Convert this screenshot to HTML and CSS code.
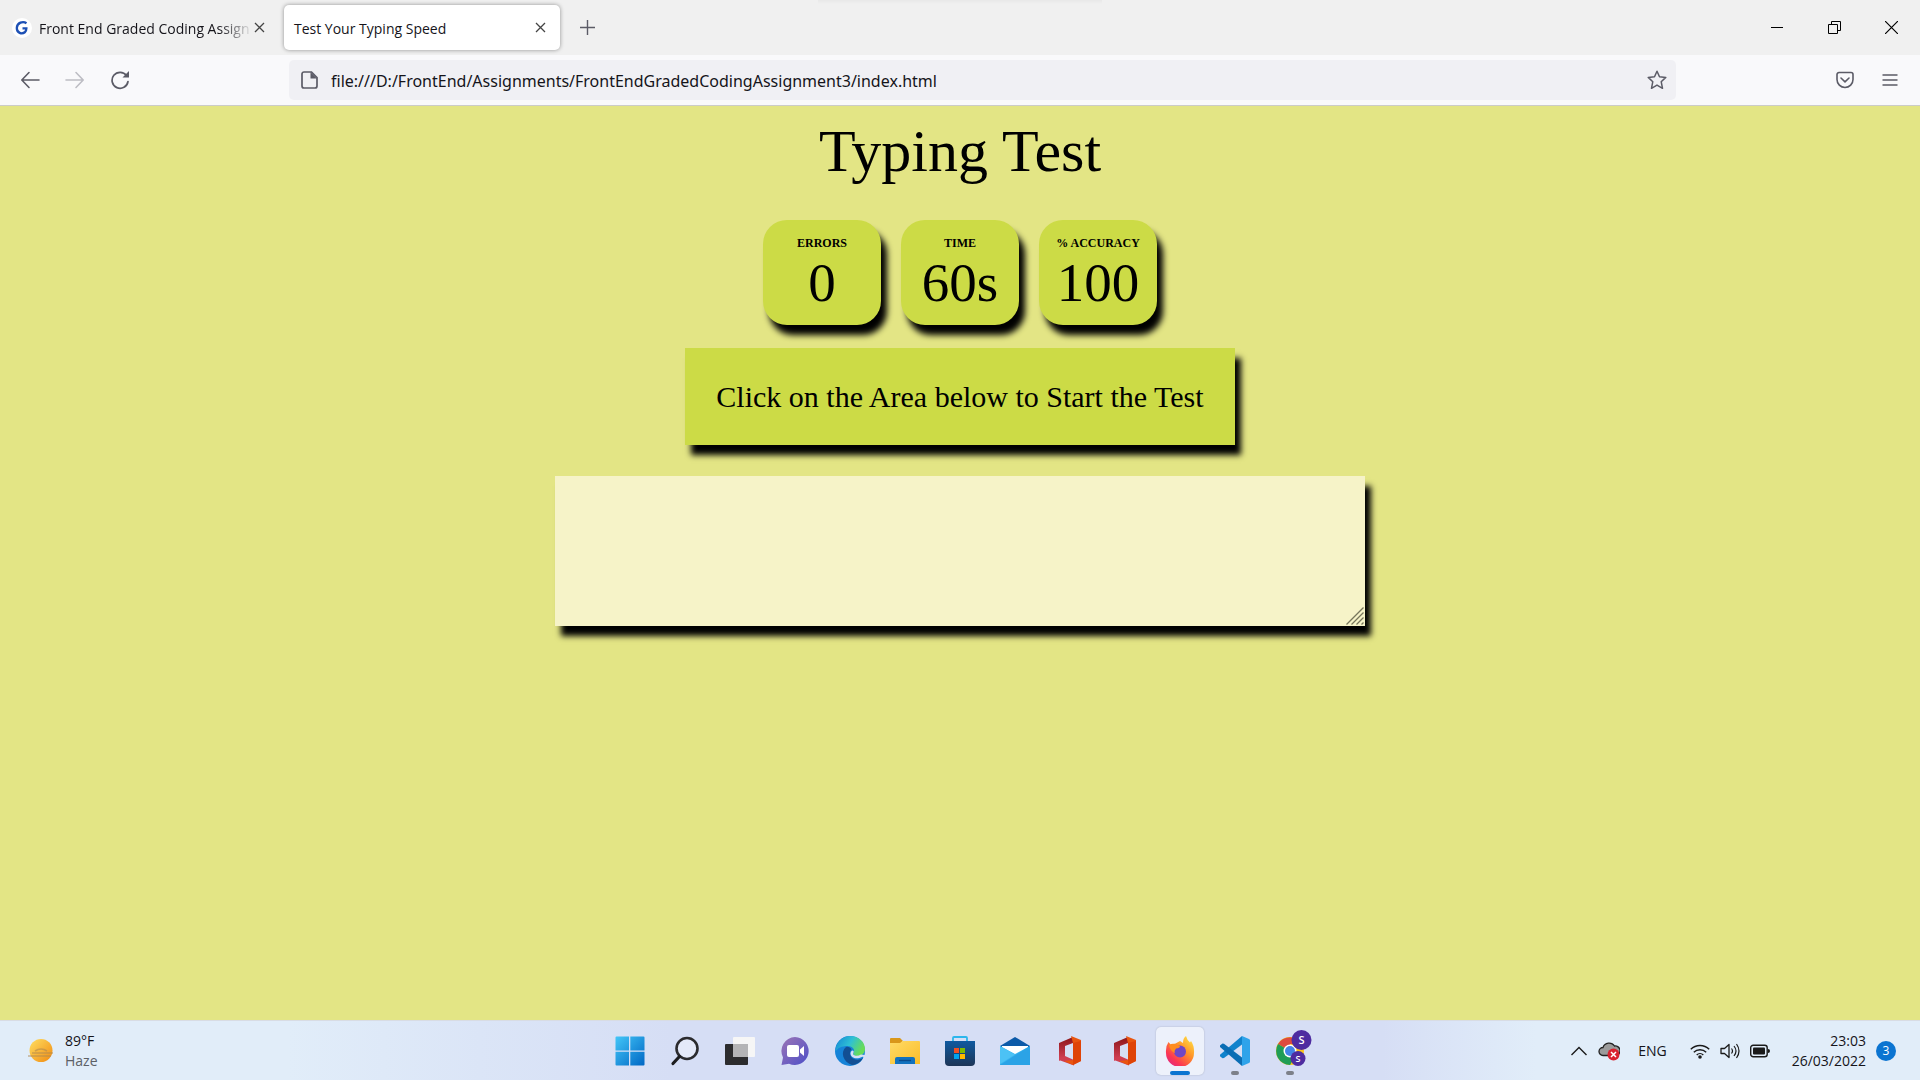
FILE: index.html
```html
<!DOCTYPE html>
<html lang="en">
<head>
<meta charset="utf-8">
<title>Test Your Typing Speed</title>
<link rel="stylesheet" href="styles.css">
</head>
<body>
<header class="browser">
  <div class="tabstrip">
    <div class="tab">
      <svg class="favicon" width="20" height="20" viewBox="0 0 20 20"><circle cx="10" cy="10" r="10" fill="#fff"/><path d="M14.500 5.200C11 2.800 5 4.500 4.800 10c0 5 5 6.500 8 4.300 1.200-1 1.600-2.300 1.600-4H10.500" fill="none" stroke="#1d50b5" stroke-width="2.300"/></svg>
      <button class="tab-title tab-title-faded">Front End Graded Coding Assign</button>
      <button class="tab-close" aria-label="Close tab"><svg width="11" height="11" viewBox="0 0 11 11"><path d="M1 1l9 9M10 1L1 10" stroke="#444" stroke-width="1.300"/></svg></button>
    </div>
    <div class="tab tab-active">
      <button class="tab-title">Test Your Typing Speed</button>
      <button class="tab-close" aria-label="Close tab"><svg width="11" height="11" viewBox="0 0 11 11"><path d="M1 1l9 9M10 1L1 10" stroke="#444" stroke-width="1.300"/></svg></button>
    </div>
    <button class="new-tab" aria-label="New tab"><svg width="15" height="15" viewBox="0 0 15 15"><path d="M7.500 0v15M0 7.500h15" stroke="#5b5b66" stroke-width="1.400"/></svg></button>
    <div class="window-controls">
      <button aria-label="Minimize"><svg width="13" height="13" viewBox="0 0 13 13"><path d="M0 6.500h12" stroke="#000"/></svg></button>
      <button aria-label="Restore"><svg width="13" height="13" viewBox="0 0 13 13"><path d="M.5 3.500h9v9h-9zM3.500 3.500v-3h9v9h-3" fill="none" stroke="#000"/></svg></button>
      <button aria-label="Close"><svg width="13" height="13" viewBox="0 0 13 13"><path d="M0 0l13 13M13 0L0 13" stroke="#000" stroke-width="1.200"/></svg></button>
    </div>
  </div>
  <div class="toolbar">
    <div class="nav">
      <button aria-label="Back"><svg width="20" height="20" viewBox="0 0 20 20"><path d="M19 10H2M9 2.500L1.800 10 9 17.500" fill="none" stroke="#5b5b66" stroke-width="1.600" stroke-linecap="round" stroke-linejoin="round"/></svg></button>
      <button aria-label="Forward" disabled><svg width="20" height="20" viewBox="0 0 20 20"><path d="M1 10h17M11 2.500l7.200 7.500-7.200 7.500" fill="none" stroke="#bdbdc4" stroke-width="1.600" stroke-linecap="round" stroke-linejoin="round"/></svg></button>
      <button aria-label="Reload"><svg width="20" height="20" viewBox="0 0 20 20"><path d="M16.500 5.500A8 8 0 1 0 18 11.500" fill="none" stroke="#5b5b66" stroke-width="1.700" stroke-linecap="round"/><path d="M19 1v6.500h-6.500z" fill="#5b5b66"/></svg></button>
    </div>
    <div class="urlbar">
      <svg width="17" height="18" viewBox="0 0 17 18"><path d="M3 1h7.500L16 6.500V15a2 2 0 0 1-2 2H3a2 2 0 0 1-2-2V3a2 2 0 0 1 2-2z" fill="none" stroke="#5b5b66" stroke-width="1.700"/><path d="M9.500 1v6.500H16z" fill="#5b5b66"/></svg>
      <input class="url" aria-label="Address" value="file:///D:/FrontEnd/Assignments/FrontEndGradedCodingAssignment3/index.html">
      <button aria-label="Bookmark"><svg width="20" height="20" viewBox="0 0 20 20"><path d="M10 1.200l2.500 5.500 6.300.7-4.600 4.300 1.300 6.600-5.500-3.200-5.500 3.200 1.300-6.600L1.200 7.400l6.300-.7z" fill="none" stroke="#5b5b66" stroke-width="1.500" stroke-linejoin="round"/></svg></button>
    </div>
    <div class="tools">
      <button aria-label="Save to Pocket"><svg width="18" height="18" viewBox="0 0 18 18"><path d="M3 1.500h12a2 2 0 0 1 2 2V8.500a8 8 0 0 1-16 0V3.500a2 2 0 0 1 2-2z" fill="none" stroke="#5b5b66" stroke-width="1.600"/><path d="M5 7l4 3.800L13 7" fill="none" stroke="#5b5b66" stroke-width="1.600" stroke-linecap="round" stroke-linejoin="round"/></svg></button>
      <button aria-label="Menu"><svg width="16" height="16" viewBox="0 0 16 16"><path d="M.5 3h15M.5 8h15M.5 13h15" stroke="#5b5b66" stroke-width="1.500"/></svg></button>
    </div>
  </div>
</header>

<main class="page">
  <h1 class="heading">Typing Test</h1>
  <section class="stats">
    <div class="stat"><div class="stat-label">ERRORS</div><div class="stat-value">0</div></div>
    <div class="stat"><div class="stat-label">TIME</div><div class="stat-value">60s</div></div>
    <div class="stat"><div class="stat-label">% ACCURACY</div><div class="stat-value">100</div></div>
  </section>
  <label class="quote" for="typing">Click on the Area below to Start the Test</label>
  <div class="typing-wrap">
    <textarea class="typing" id="typing"></textarea>
    <svg class="grip" width="18" height="18" viewBox="0 0 18 18"><path d="M.5 17.500l17-17M5.500 17.500l12-12M10.500 17.500l7-7M15.500 17.500l2-2" stroke="#77765c" stroke-width="1.300"/></svg>
  </div>
</main>

<footer class="taskbar">
  <button class="weather">
    <svg width="28" height="28" viewBox="0 0 28 28"><defs><linearGradient id="sun" x1="0" y1="0" x2="1" y2="1"><stop offset="0" stop-color="#ffdf62"/><stop offset="1" stop-color="#f08a10"/></linearGradient></defs><circle cx="14" cy="13.500" r="11.500" fill="url(#sun)"/><path d="M5 16h21M1 19h23M8 14q6-4 12 0" stroke="#b08a50" stroke-opacity=".6" stroke-width="1.600" fill="none"/></svg>
    <span class="weather-text"><span>89°F</span><span class="muted">Haze</span></span>
  </button>

  <nav class="apps">
    <button aria-label="Start"><svg width="30" height="30" viewBox="0 0 30 30"><defs><linearGradient id="win" x1="0" y1="0" x2="1" y2="1"><stop offset="0" stop-color="#43c6f8"/><stop offset="1" stop-color="#0067c4"/></linearGradient></defs><path d="M1.500.5H14v14H.5v-13a1 1 0 0 1 1-1zM15.300.5h13.200a1 1 0 0 1 1 1v13H15.300zM.5 15.800H14v13.700H1.500a1 1 0 0 1-1-1zM15.300 15.800h14.200v12.700a1 1 0 0 1-1 1H15.300z" fill="url(#win)"/></svg></button>
    <button aria-label="Search"><svg width="30" height="30" viewBox="0 0 30 30"><circle cx="17" cy="12.500" r="10.500" fill="#e4e9f8" stroke="#2b2b2e" stroke-width="2.600"/><path d="M9.500 20.500L3 27.500" stroke="#1d1d1f" stroke-width="3.200" stroke-linecap="round"/></svg></button>
    <button aria-label="Task view"><svg width="30" height="30" viewBox="0 0 30 30"><rect y="8" width="23" height="21" rx="1" fill="#2c2c2e"/><rect x="8" y="1" width="22" height="20" rx="1" fill="#f6f6f6"/><path d="M8 8h15v13H8z" fill="#b4b4b6"/></svg></button>
    <button aria-label="Chat"><svg width="30" height="30" viewBox="0 0 30 30"><defs><linearGradient id="chat" x1="0" y1="0" x2="1" y2="1"><stop offset="0" stop-color="#9d75b5"/><stop offset="1" stop-color="#4d4fc8"/></linearGradient></defs><path d="M15 1a14 14 0 1 1-6 26.800L1.500 29 3 21.500A14 14 0 0 1 15 1z" fill="url(#chat)"/><rect x="7" y="9" width="12" height="12" rx="2" fill="#fff"/><path d="M20 13.500l4-3.500v10l-4-3.500z" fill="#fff"/></svg></button>
    <button aria-label="Edge"><svg width="30" height="30" viewBox="0 0 30 30"><defs><linearGradient id="edge" x1="0" y1="0" x2="1" y2=".4"><stop offset="0" stop-color="#1386d5"/><stop offset=".55" stop-color="#2fc0d4"/><stop offset="1" stop-color="#67dc58"/></linearGradient></defs><circle cx="15" cy="15" r="15" fill="#1683d8"/><path d="M1 11C3 4 9 0 15 0c9 0 15 6 15 13 0 4-3 7-7.500 7-3 0-5-1.500-4-3 2-3-.5-7-6-7C7 10 2 12 .5 16z" fill="url(#edge)"/><path d="M11 11c-6 5-3 15 6 18 6-.5 9.500-4 11-7-5 3-12 2-13-4-.3-2 .5-3.500 1.500-4.500-1-2-3-3-5.500-2.500z" fill="#124f94"/><path d="M15.500 17.500c.3 4 5.500 6.500 11.500 3.500 1-.5 1.800-.3 1.500.5-.2.700-.6 1.300-1 2L30 26V19l-4-.5c-2 1.200-4.300 1.500-6 1-1.800-.5-2.400-1.500-1.500-3 1-2.500-2.500-3-3 1z" fill="#d7dff5"/></svg></button>
    <button aria-label="File Explorer"><svg width="30" height="30" viewBox="0 0 30 30"><defs><linearGradient id="fold" x1="0" y1="0" x2="1" y2="1"><stop offset="0" stop-color="#ffdb67"/><stop offset="1" stop-color="#fbbd29"/></linearGradient></defs><path d="M0 7V3a1 1 0 0 1 1-1h9l3 3h-1v3z" fill="#d9971a"/><path d="M0 7h10l2.500-2H29a1 1 0 0 1 1 1v22H0z" fill="url(#fold)"/><path d="M5 28v-5a2 2 0 0 1 2-2h16a2 2 0 0 1 2 2v5z" fill="#1272bf"/><path d="M9 24.500h12" stroke="#0a4b8c" stroke-width="1.400"/></svg></button>
    <button aria-label="Microsoft Store"><svg width="30" height="30" viewBox="0 0 30 30"><defs><linearGradient id="store" x1="0" y1="0" x2="0" y2="1"><stop offset="0" stop-color="#0f5aa0"/><stop offset="1" stop-color="#1d3557"/></linearGradient></defs><path d="M8 6V2a1 1 0 0 1 1-1h12a1 1 0 0 1 1 1v4" fill="none" stroke="#2cb6ec" stroke-width="1.800"/><path d="M0 5h30v21a4 4 0 0 1-4 4H4a4 4 0 0 1-4-4z" fill="url(#store)"/><path d="M9 12h5v5H9z" fill="#f25022"/><path d="M15 12h5v5h-5z" fill="#7fba00"/><path d="M9 18h5v5H9z" fill="#00a4ef"/><path d="M15 18h5v5h-5z" fill="#ffb900"/></svg></button>
    <button aria-label="Mail"><svg width="30" height="30" viewBox="0 0 30 30"><path d="M0 10L15 1l15 9v3H0z" fill="#0c5aa8"/><path d="M2 10h26v10H2z" fill="#fff"/><path d="M0 10l15 8 15-8v19H0z" fill="#38b4ef"/><path d="M0 29l30-19v19z" fill="#2ba3e6"/><path d="M0 10l15 8.500L0 28z" fill="#4cc2f5"/></svg></button>
    <button aria-label="Office"><svg width="30" height="30" viewBox="0 0 30 30"><defs><linearGradient id="office" x1="0" y1="0" x2="0" y2="1"><stop offset="0" stop-color="#8c1518"/><stop offset="1" stop-color="#d8435a"/></linearGradient></defs><path d="M4 7l14-6v6l-8 3v11l-6 4z" fill="url(#office)"/><path d="M4 24l6-4 9 4v5.500z" fill="#cf3d50"/><path d="M16 0l10 4v21l-8 4-9-4 9-1V7z" fill="#e9550f"/><path d="M18 7l8-2v20l-8 4z" fill="#df4307"/></svg></button>
    <button aria-label="Office"><svg width="30" height="30" viewBox="0 0 30 30"><path d="M4 7l14-6v6l-8 3v11l-6 4z" fill="url(#office)"/><path d="M4 24l6-4 9 4v5.500z" fill="#cf3d50"/><path d="M16 0l10 4v21l-8 4-9-4 9-1V7z" fill="#e9550f"/><path d="M18 7l8-2v20l-8 4z" fill="#df4307"/></svg></button>
    <button class="app-active" aria-label="Firefox"><svg width="30" height="30" viewBox="0 0 30 30"><defs><linearGradient id="fox" x1="1" y1="0" x2=".2" y2="1"><stop offset="0" stop-color="#fff04a"/><stop offset=".45" stop-color="#ff9328"/><stop offset=".8" stop-color="#fc3653"/><stop offset="1" stop-color="#e02880"/></linearGradient></defs><path d="M3.500 6l2.500 3q2-1.500 4.500-1.500L15 5l3 2q0-5 3-7 1 4 4 6.500l1-1.500q3.500 5 3 12A14 14 0 0 1 1 17Q.5 10 3.500 6z" fill="url(#fox)"/><circle cx="15" cy="15.500" r="6" fill="#6f47c6"/><path d="M4 9q5-2.500 8 .5l3 .5q0 2-4 2.500-2 2-1 4.500-5-2-6-8z" fill="#ff8d1f"/></svg></button>
    <button class="app-running" aria-label="Visual Studio Code"><svg width="30" height="30" viewBox="0 0 30 30"><path d="M22 0v8.500L4 22l-1.500.3L0 20.200v-1.400z" fill="#0f82cc"/><path d="M0 9.500L2.500 7.500 4 7.800 22 21.500V30L0 11z" fill="#0a6db4"/><path d="M22 0l7 3a2 2 0 0 1 1 2v20a2 2 0 0 1-1 2l-7 3z" fill="#2fa3ea"/></svg></button>
    <button class="app-running" aria-label="Chrome"><svg class="chrome" width="36" height="38" viewBox="0 0 36 38"><circle cx="14" cy="21" r="14" fill="#fbc41a"/><path d="M14 21L2 14A14 14 0 0 1 26 14H14z" fill="#dd4b3e"/><path d="M14 21L2 14A14 14 0 0 0 14 35l6-10z" fill="#1f9d57"/><circle cx="14" cy="21" r="6.500" fill="#fff"/><circle cx="14" cy="21" r="5" fill="#4285e8"/><circle cx="25.500" cy="10" r="10" fill="#4e2ca0"/><circle cx="22" cy="28.500" r="7.500" fill="#4e2ca0"/><text x="25.500" y="14" text-anchor="middle" class="initial">S</text><text x="22" y="32" text-anchor="middle" class="initial initial-small">S</text></svg></button>
  </nav>

  <div class="tray">
    <button aria-label="Show hidden icons"><svg width="16" height="10" viewBox="0 0 16 10"><path d="M.5 9L8 1.500 15.500 9" fill="none" stroke="#1a1a1a" stroke-width="1.400"/></svg></button>
    <button aria-label="OneDrive"><svg width="22" height="20" viewBox="0 0 22 20"><path d="M5 14.500a4 4 0 0 1 0-8A6.500 6.500 0 0 1 16.500 5 4.800 4.800 0 0 1 18 14.500z" fill="#9b9b9b" stroke="#222" stroke-width="1.300"/><circle cx="15.500" cy="13.500" r="6" fill="#d9222f"/><path d="M13 11l5 5M18 11l-5 5" stroke="#fff" stroke-width="1.500"/></svg></button>
    <button class="lang">ENG</button>
    <button class="status" aria-label="Network, volume and battery">
      <svg width="20" height="16" viewBox="0 0 20 16"><path d="M.8 6.300a13 13 0 0 1 18.400 0M3.800 9.300a8.800 8.800 0 0 1 12.400 0M6.700 12a4.700 4.700 0 0 1 6.600 0" fill="none" stroke="#1a1a1a" stroke-width="1.400"/><circle cx="10" cy="14" r="1.800" fill="#1a1a1a"/></svg>
      <svg width="20" height="16" viewBox="0 0 20 16"><path d="M1 5.500h3.500L9 1.500v13l-4.500-4H1z" fill="none" stroke="#1a1a1a" stroke-width="1.300" stroke-linejoin="round"/><path d="M11.500 5.500q2 2.500 0 5M14 3q4 5 0 10M16.500 1q5 7 0 14" fill="none" stroke="#1a1a1a" stroke-width="1.200"/></svg>
      <svg width="20" height="14" viewBox="0 0 20 14"><rect x=".7" y="1.200" width="16.500" height="11.600" rx="2.500" fill="none" stroke="#1a1a1a" stroke-width="1.400"/><rect x="3" y="3.500" width="12" height="7" rx="1" fill="#1a1a1a"/><path d="M18 5q2 0 2 2t-2 2z" fill="#1a1a1a"/></svg>
    </button>
    <button class="clock"><span>23:03</span><span>26/03/2022</span></button>
    <button class="badge">3</button>
  </div>
</footer>
</body>
</html>
```
FILE: styles.css
```css
* {
  box-sizing: border-box;
}

body {
  margin: 0;
  min-height: 100vh;
  display: flex;
  flex-direction: column;
  font-family: "Open Sans", "Noto Sans", sans-serif;
  font-size: 14px;
  color: #15141a;
}

button {
  margin: 0;
  padding: 0;
  border: 0;
  background: none;
  font: inherit;
  color: inherit;
  display: flex;
  align-items: center;
  justify-content: center;
}

svg {
  display: block;
  flex: none;
}

/* Browser window */
.tabstrip {
  display: flex;
  align-items: center;
  height: 55px;
  background: linear-gradient(#e8e8e8, #f0f0f0) top / 284px 4px no-repeat #f0f0f0;
  padding-left: 8px;
}

.tab {
  display: flex;
  align-items: center;
  width: 276px;
  height: 45px;
  padding: 0 18px 0 4px;
  border-radius: 5px;
}

.tab-active {
  background: #fff;
  box-shadow: 0 0 4px rgba(0, 0, 0, 0.4);
  padding: 0 13px 0 10px;
}

.favicon {
  margin-right: 7px;
}

.tab-title {
  flex: 1;
  min-width: 0;
  padding-top: 2px;
  justify-content: flex-start;
  white-space: nowrap;
}

.tab-title-faded {
  mask-image: linear-gradient(to right, #000 84%, transparent);
}

.tab-close {
  width: 13px;
  height: 24px;
}

.new-tab {
  width: 54px;
  height: 45px;
}

.window-controls {
  display: flex;
  margin-left: auto;
}

.window-controls button {
  width: 57px;
  height: 54px;
}

.toolbar {
  display: flex;
  align-items: center;
  height: 51px;
  background: #f9f9fb;
  border-bottom: 1px solid #ccccc8;
}

.nav {
  display: flex;
  width: 289px;
  padding-left: 7px;
}

.nav button,
.tools button {
  width: 45px;
  height: 40px;
}

.urlbar {
  display: flex;
  align-items: center;
  flex: 1;
  height: 40px;
  padding: 0 9px 0 12px;
  border-radius: 5px;
  background: #f0f0f4;
}

.url {
  flex: 1;
  border: 0;
  padding: 2px 13px 0;
  background: none;
  font: 16px "Noto Sans", "Open Sans", sans-serif;
  color: #15141a;
}

.tools {
  display: flex;
  justify-content: flex-end;
  width: 244px;
  padding-right: 8px;
}

/* Typing test */
.page {
  flex: 1;
  display: flex;
  flex-direction: column;
  align-items: center;
  padding-top: 8px;
  background: #e3e585;
  font-family: "Liberation Serif", serif;
  color: #000;
}

.heading {
  margin: 0 0 32px;
  font-size: 60px;
  line-height: 74px;
  font-weight: 400;
}

.stats {
  display: flex;
  gap: 20px;
  margin-bottom: 23px;
}

.stat {
  width: 118px;
  height: 105px;
  padding-top: 15px;
  border-radius: 24px;
  background: #ccdb46;
  box-shadow: 6px 10px 6px #000;
  text-align: center;
}

.stat-label {
  font-size: 12px;
  line-height: 16px;
  font-weight: 700;
}

.stat-value {
  font-size: 55px;
  line-height: 64px;
}

.quote {
  padding: 30px 31px;
  background: #ccdb46;
  box-shadow: 6px 10px 6px #000;
  font-size: 30px;
  line-height: 37px;
}

.typing-wrap {
  position: relative;
  width: 810px;
  max-width: 100%;
  margin-top: 31px;
}

.typing {
  display: block;
  width: 100%;
  height: 150px;
  padding: 10px;
  border: 0;
  background: #f6f3c8;
  box-shadow: 6px 10px 6px #000;
  font: 30px "Liberation Serif", serif;
}

.typing::-webkit-resizer {
  background: transparent;
}

.grip {
  position: absolute;
  right: 1px;
  bottom: 1px;
  pointer-events: none;
}

/* Taskbar */
.taskbar {
  display: grid;
  grid-template-columns: 1fr auto 1fr;
  align-items: center;
  height: 60px;
  border-top: 1px solid #d8dce4;
  background: linear-gradient(to right, #e1edf9 15%, #dbe5f7 25%, #d6def5 35%, #d6def5 72%, #e1edf9 80%);
}

.weather {
  justify-self: start;
  padding-left: 27px;
  gap: 10px;
  text-align: left;
}

.weather-text,
.clock {
  display: flex;
  flex-direction: column;
  line-height: 20px;
}

.muted {
  color: #5c6066;
}

.apps {
  display: flex;
  gap: 7px;
}

.apps button {
  position: relative;
  width: 48px;
  height: 48px;
}

.app-active {
  border-radius: 5px;
  background: #edf1fb;
  box-shadow: 0 0 2px rgba(0, 0, 0, 0.2);
}

.app-active::after,
.app-running::after {
  content: "";
  position: absolute;
  bottom: 0;
  width: 8px;
  height: 4px;
  border-radius: 2px;
  background: #7d8089;
}

.app-active::after {
  width: 20px;
  background: #0b74d1;
}

.chrome {
  margin: -4px -8px 0 0;
}

.initial {
  font: 600 11px "Open Sans", sans-serif;
  fill: #fff;
}

.initial-small {
  font-size: 9px;
}

.tray {
  display: flex;
  align-items: center;
  justify-content: flex-end;
  padding-right: 24px;
}

.tray > button {
  margin-left: 11px;
}

.tray .lang {
  margin: 0 12px 0 18px;
}

.status {
  gap: 10px;
}

.tray .clock {
  align-items: flex-end;
  margin-left: 22px;
}

.tray .badge {
  width: 20px;
  height: 20px;
  margin-left: 10px;
  border-radius: 50%;
  background: #0b74d1;
  color: #fff;
  font-size: 12px;
}
```
